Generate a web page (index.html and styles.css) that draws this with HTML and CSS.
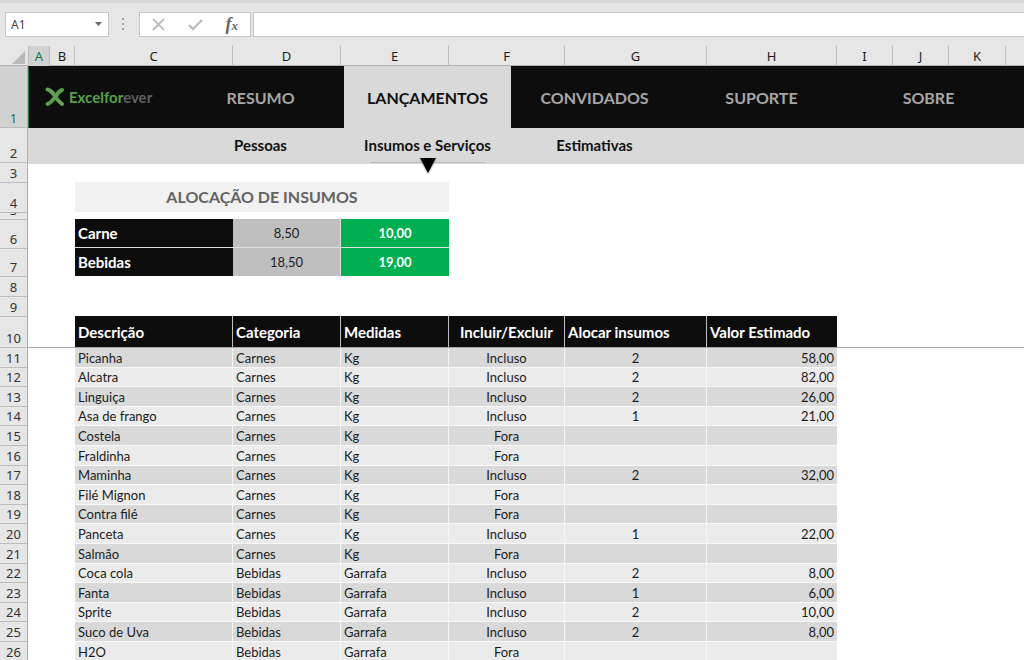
FILE: index.html
```html
<!DOCTYPE html>
<html lang="pt-BR">
<head>
<meta charset="utf-8">
<meta name="viewport" content="width=device-width, initial-scale=1">
<title>Excelforever - Alocação de Insumos</title>
<link rel="stylesheet" href="styles.css">
</head>
<body>
<header class="formula-bar">
  <div class="name-box">
    <input class="name-input" type="text" value="A1" aria-label="Caixa de nome">
    <button class="name-toggle" type="button" aria-label="Abrir lista de nomes"><svg width="7" height="4" viewBox="0 0 7 4"><path d="M0 0h7L3.500 4z" fill="#666"/></svg></button>
  </div>
  <svg class="grip" width="3" height="12" viewBox="0 0 3 12" aria-hidden="true"><path d="M0 0h2v2H0zM0 5h2v2H0zM0 10h2v2H0z" fill="#a0a0a0"/></svg>
  <div class="actions">
    <button type="button" class="action" aria-label="Cancelar"><svg width="13" height="13" viewBox="0 0 13 13"><path d="M1 1l11 11M12 1L1 12" stroke="#bdbdbd" stroke-width="1.800" fill="none"/></svg></button>
    <button type="button" class="action" aria-label="Inserir"><svg width="15" height="13" viewBox="0 0 15 13"><path d="M1 7l4 4 9-9" stroke="#bdbdbd" stroke-width="2.400" fill="none"/></svg></button>
    <button type="button" class="action fx" aria-label="Inserir função">f<span class="fx-x">x</span></button>
  </div>
  <input class="formula-input" type="text" aria-label="Barra de fórmulas">
</header>

<div class="column-heads">
  <button class="corner" type="button" aria-label="Selecionar tudo"><svg width="13" height="13" viewBox="0 0 13 13"><path d="M13 0v13H0z" fill="#b9b9b9"/></svg></button>
  <span class="col-head current">A</span><span class="col-head">B</span><span class="col-head">C</span><span class="col-head">D</span><span class="col-head">E</span><span class="col-head">F</span><span class="col-head">G</span><span class="col-head">H</span><span class="col-head">I</span><span class="col-head">J</span><span class="col-head">K</span><span class="col-head"></span>
</div>

<div class="workbook">
  <ol class="row-heads">
    <li class="h-nav current">1</li><li class="h-sub">2</li><li class="h-gap">3</li><li class="h-title">4</li><li class="h-thin">5</li><li class="h-sum">6</li><li class="h-sum-last">7</li><li>8</li><li>9</li><li class="h-table">10</li>
    <li class="data">11</li><li class="data short">12</li><li class="data">13</li><li class="data short">14</li><li class="data">15</li><li class="data">16</li><li class="data short">17</li><li class="data">18</li><li class="data short">19</li><li class="data">20</li><li class="data">21</li><li class="data short">22</li><li class="data">23</li><li class="data short">24</li><li class="data">25</li><li class="data">26</li>
  </ol>

  <main class="sheet">
    <nav class="tabs" aria-label="Principal">
      <a class="logo" href="#"><svg width="20" height="20" viewBox="0 0 20 20" aria-hidden="true"><path d="M2.500 2.500q4 1 7 6t7.500 8.500" stroke="#6a9c5c" stroke-width="4" stroke-linecap="round" fill="none"/><path d="M17 3q-3 1-7 7t-7.500 7" stroke="#55a045" stroke-width="4" stroke-linecap="round" fill="none"/></svg><span class="brand">Excelfor<span class="brand-end">ever</span></span></a>
      <a class="tab" href="#">RESUMO</a>
      <a class="tab active" href="#" aria-current="page">LANÇAMENTOS</a>
      <a class="tab" href="#">CONVIDADOS</a>
      <a class="tab" href="#">SUPORTE</a>
      <a class="tab" href="#">SOBRE</a>
    </nav>
    <nav class="subtabs" aria-label="Lançamentos">
      <a class="subtab" href="#">Pessoas</a>
      <a class="subtab chosen" href="#" aria-current="page">Insumos e Serviços<svg class="pointer" width="24" height="20" viewBox="0 0 24 20" aria-hidden="true"><path d="M4 2h16l-8 15z" fill="#000"/></svg></a>
      <a class="subtab" href="#">Estimativas</a>
    </nav>

    <section class="allocation">
      <h1 class="title">ALOCAÇÃO DE INSUMOS</h1>
      <table class="summary">
        <colgroup><col class="c-desc"><col class="c-cat"><col class="c-med"></colgroup>
        <tbody>
          <tr><th scope="row">Carne</th><td class="need">8,50</td><td class="done">10,00</td></tr>
          <tr><th scope="row">Bebidas</th><td class="need">18,50</td><td class="done">19,00</td></tr>
        </tbody>
      </table>
    </section>

    <section class="items-area">
      <table class="items">
        <colgroup><col class="c-desc"><col class="c-cat"><col class="c-med"><col class="c-inc"><col class="c-aloc"><col class="c-val"></colgroup>
        <thead><tr><th>Descrição</th><th>Categoria</th><th>Medidas</th><th class="mid">Incluir/Excluir</th><th>Alocar insumos</th><th>Valor Estimado</th></tr></thead>
        <tbody>
          <tr><td>Picanha</td><td>Carnes</td><td>Kg</td><td>Incluso</td><td>2</td><td>58,00</td></tr>
          <tr><td>Alcatra</td><td>Carnes</td><td>Kg</td><td>Incluso</td><td>2</td><td>82,00</td></tr>
          <tr><td>Linguiça</td><td>Carnes</td><td>Kg</td><td>Incluso</td><td>2</td><td>26,00</td></tr>
          <tr><td>Asa de frango</td><td>Carnes</td><td>Kg</td><td>Incluso</td><td>1</td><td>21,00</td></tr>
          <tr><td>Costela</td><td>Carnes</td><td>Kg</td><td>Fora</td><td></td><td></td></tr>
          <tr><td>Fraldinha</td><td>Carnes</td><td>Kg</td><td>Fora</td><td></td><td></td></tr>
          <tr><td>Maminha</td><td>Carnes</td><td>Kg</td><td>Incluso</td><td>2</td><td>32,00</td></tr>
          <tr><td>Filé Mignon</td><td>Carnes</td><td>Kg</td><td>Fora</td><td></td><td></td></tr>
          <tr><td>Contra filé</td><td>Carnes</td><td>Kg</td><td>Fora</td><td></td><td></td></tr>
          <tr><td>Panceta</td><td>Carnes</td><td>Kg</td><td>Incluso</td><td>1</td><td>22,00</td></tr>
          <tr><td>Salmão</td><td>Carnes</td><td>Kg</td><td>Fora</td><td></td><td></td></tr>
          <tr><td>Coca cola</td><td>Bebidas</td><td>Garrafa</td><td>Incluso</td><td>2</td><td>8,00</td></tr>
          <tr><td>Fanta</td><td>Bebidas</td><td>Garrafa</td><td>Incluso</td><td>1</td><td>6,00</td></tr>
          <tr><td>Sprite</td><td>Bebidas</td><td>Garrafa</td><td>Incluso</td><td>2</td><td>10,00</td></tr>
          <tr><td>Suco de Uva</td><td>Bebidas</td><td>Garrafa</td><td>Incluso</td><td>2</td><td>8,00</td></tr>
          <tr><td>H2O</td><td>Bebidas</td><td>Garrafa</td><td>Fora</td><td></td><td></td></tr>
        </tbody>
      </table>
    </section>
  </main>
</div>
</body>
</html>
```

FILE: styles.css
```css
* { box-sizing: border-box; }

body {
  margin: 0;
  height: 100vh;
  overflow: hidden;
  display: flex;
  flex-direction: column;
  background: #fff;
  color: #1c1c1c;
  font-family: Lato, "Noto Sans", sans-serif;
  font-size: 13px;
}

button, input { font: inherit; color: inherit; border: 0; padding: 0; margin: 0; background: none; }
a { color: inherit; text-decoration: none; }

/* Formula bar */
.formula-bar {
  flex: none;
  display: flex;
  align-items: center;
  height: 46px;
  padding: 2px 0 3px 5px;
  background: #e6e6e6;
  border-top: 3px solid #d6d6d6;
}
.name-box {
  display: flex;
  width: 104px;
  height: 25px;
  background: #fff;
  border: 1px solid #c6c6c6;
}
.name-input { flex: 1; min-width: 0; padding-left: 5px; color: #444; font-family: "Noto Sans", sans-serif; font-size: 12px; }
.name-toggle { width: 19px; display: grid; place-items: center; }
.grip { margin: 0 14px 0 13px; }
.actions {
  display: flex;
  width: 112px;
  height: 25px;
  background: #fff;
  border: 1px solid #c6c6c6;
}
.action { flex: 1; display: flex; align-items: center; justify-content: center; }
.fx { font: italic bold 18px/20px "Liberation Serif", serif; color: #666; }
.fx-x { font-size: 13px; padding-top: 3px; }
.formula-input {
  flex: 1;
  min-width: 0;
  height: 25px;
  margin-left: 2px;
  background: #fff;
  border: 1px solid #c6c6c6;
  border-right: 0;
}

/* Column letters */
.column-heads {
  flex: none;
  display: grid;
  grid-template-columns: 28px 22px 25px 158px 108px 108px 116px 142px 130px 56px 56px 57px 1fr;
  height: 20px;
  background: #e6e6e6;
  border-bottom: 1px solid #b5b5b5;
  font: 13px/20px "Noto Sans", sans-serif;
}
.corner { display: flex; justify-content: flex-end; align-items: flex-end; padding: 0 3px 2px 0; }
.col-head { text-align: center; border-right: 1px solid #bcbcbc; }
.col-head:last-child { border-right: 0; }
.col-head.current { background: #d2d2d2; color: #217346; border-left: 1px solid #bcbcbc; box-shadow: 0 1px #217346; }

/* Row numbers */
.workbook { flex: 1; min-height: 0; display: flex; }
.row-heads {
  flex: none;
  width: 28px;
  margin: 0;
  padding: 0;
  list-style: none;
  background: #e6e6e6;
  border-right: 1px solid #b0b0b0;
  color: #333;
  font: 13px/18px "Noto Sans", sans-serif;
}
.row-heads li {
  display: flex;
  align-items: flex-end;
  justify-content: center;
  height: 20px;
  overflow: hidden;
  border-bottom: 1px solid #bcbcbc;
}
.row-heads .h-nav { height: 62px; }
.row-heads .h-sub { height: 35px; }
.row-heads .h-title { height: 30px; }
.row-heads .h-thin { height: 7px; }
.row-heads .h-sum { height: 29px; }
.row-heads .h-sum-last { height: 28px; }
.row-heads .h-table { height: 31px; }
.row-heads .short { height: 19px; }
.row-heads .current { background: #d2d2d2; color: #217346; }

/* Sheet navigation */
.sheet { flex: 1; min-width: 0; overflow: hidden; }
.tabs {
  display: flex;
  height: 62px;
  background: #0d0d0d;
  border-left: 1px solid #217346;
  color: #a6a6a6;
  font-size: 16px;
  font-weight: bold;
}
.logo { flex: none; display: flex; align-items: center; gap: 4px; width: 148px; padding-left: 16px; }
.brand { color: #55a045; font-size: 15px; font-weight: bold; }
.brand-end { color: #5f5f5f; }
.tab { flex: none; display: flex; align-items: center; justify-content: center; width: 167px; }
.tab.active { background: #d9d9d9; color: #111; }
.subtabs {
  display: flex;
  height: 36px;
  padding-left: 149px;
  background: #d9d9d9;
  color: #111;
  font-size: 15px;
  font-weight: bold;
}
.subtab {
  position: relative;
  flex: none;
  display: flex;
  align-items: center;
  justify-content: center;
  width: 167px;
  padding-bottom: 2px;
}
.chosen::after {
  content: "";
  position: absolute;
  left: 26px;
  right: 26px;
  bottom: 1px;
  border-bottom: 1px solid #bcbcbc;
}
.pointer { position: absolute; z-index: 1; left: 72px; top: 28px; filter: drop-shadow(0 1px 1px #999); }

/* Allocation summary */
.c-desc { width: 158px; }
.c-cat, .c-med { width: 108px; }
.c-inc { width: 116px; }
.c-aloc { width: 142px; }
.c-val { width: 130px; }

.allocation { width: 374px; margin: 18px 0 0 47px; }
.title {
  height: 30px;
  margin: 0 0 7px;
  background: #f1f1f1;
  color: #636363;
  text-align: center;
  font-size: 16px;
  line-height: 30px;
}
table { table-layout: fixed; border-collapse: separate; border-spacing: 0; }
th, td { padding: 0 3px; text-align: left; white-space: nowrap; overflow: hidden; }
.summary { width: 374px; }
.summary th, .summary td { height: 29px; border-bottom: 1px solid #e0e0e0; }
.summary tr:last-child > * { height: 28px; border-bottom: 0; }
.summary th { background: #0d0d0d; color: #fff; font-size: 15px; }
.summary td { text-align: center; }
.summary .need { background: #bfbfbf; border-right: 1px solid #ddd; }
.summary .done { background: #00b050; color: #fff; font-weight: bold; }

/* Items list */
.items-area { position: relative; margin-top: 40px; }
.items-area::before {
  content: "";
  position: absolute;
  left: 0;
  right: 0;
  top: 31px;
  border-top: 1px solid #a6a6a6;
}
.items { width: 762px; margin-left: 47px; }
.items th {
  height: 32px;
  background: #0d0d0d;
  color: #fff;
  border-right: 1px solid #bfbfbf;
  border-bottom: 1px solid #a6a6a6;
  font-size: 15px;
}
.items th:last-child { border-right: 0; }
.items .mid { text-align: center; }
.items td { height: 20px; line-height: 18px; border-right: 1px solid #f5f5f5; border-bottom: 1px solid #f8f8f8; background: #ebebeb; }
.items tbody tr:nth-child(odd) td { background: #d9d9d9; }
.items tbody tr:nth-child(5n+2) td, .items tbody tr:nth-child(5n+4) td { height: 19px; }
.items td:nth-child(4), .items td:nth-child(5) { text-align: center; }
.items td:nth-child(6) { text-align: right; border-right: 0; }
```
